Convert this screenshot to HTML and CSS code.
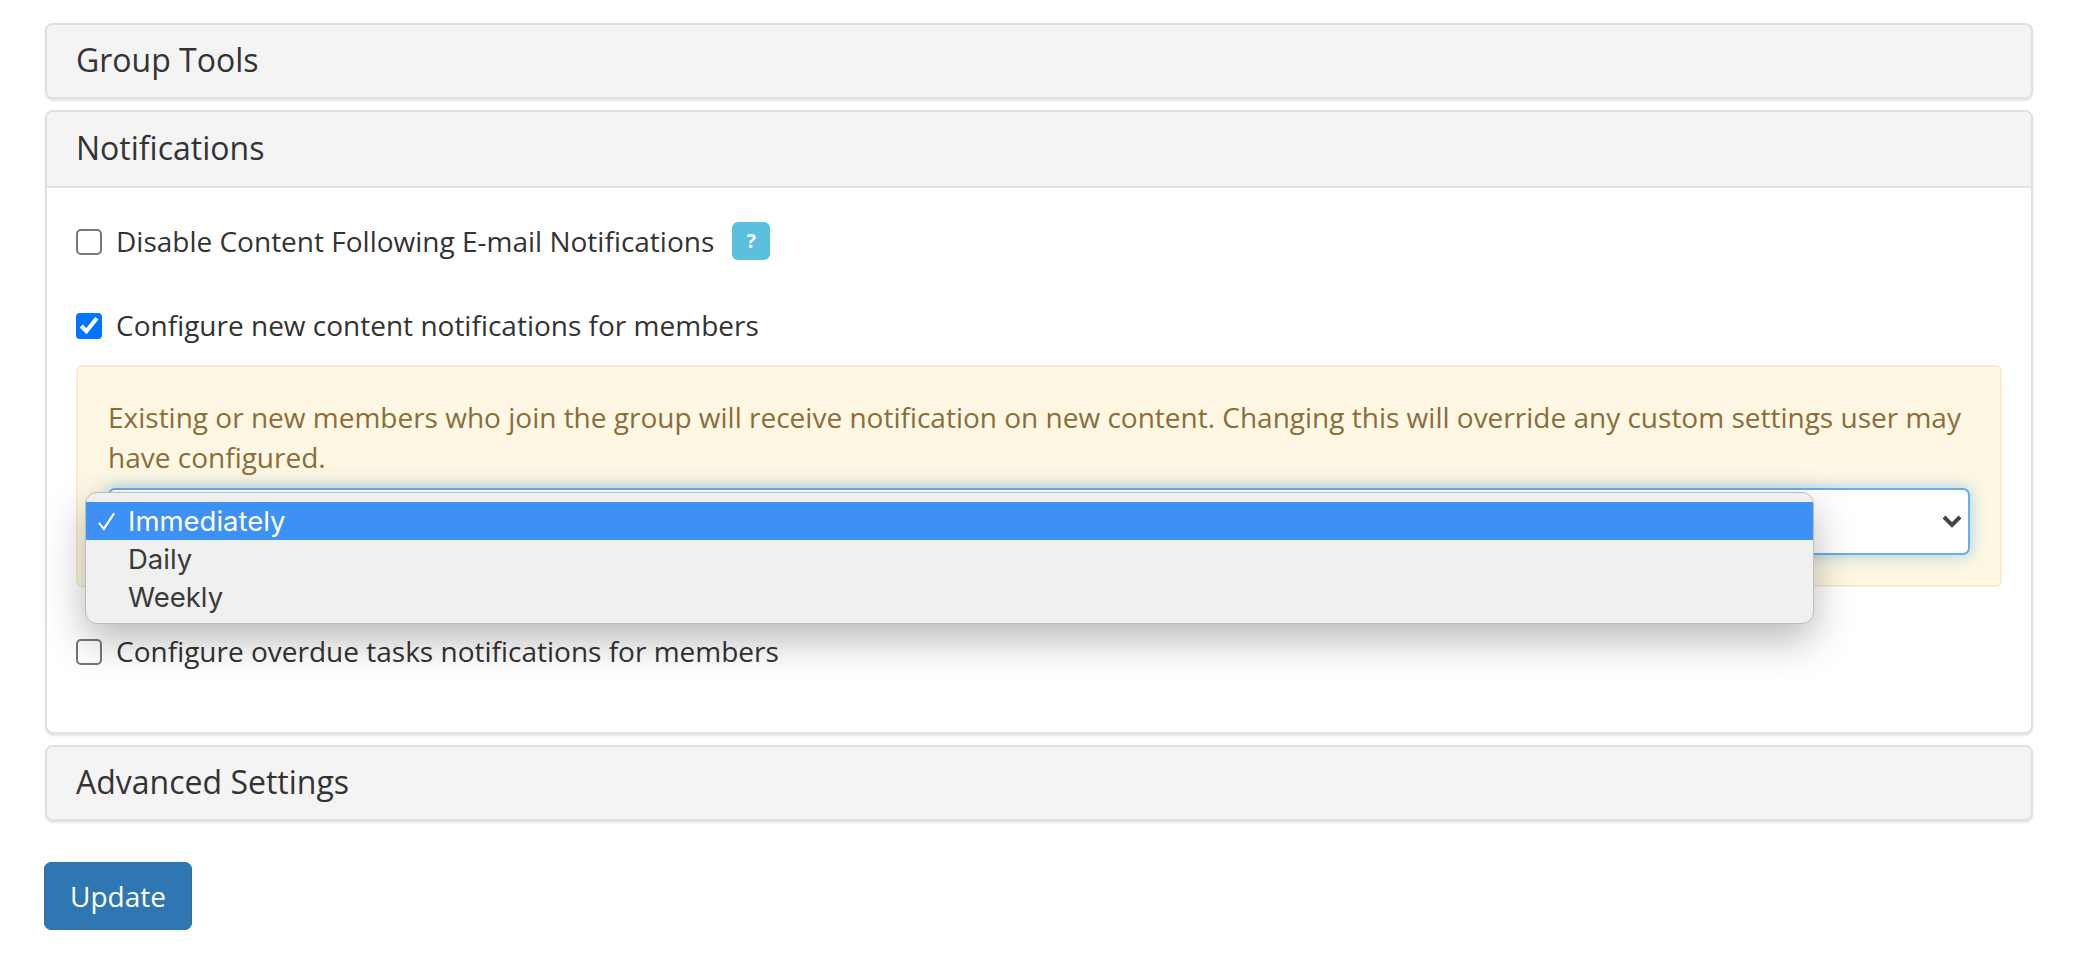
FILE: index.html
```html
<!DOCTYPE html>
<html lang="en">
<head>
<meta charset="utf-8">
<title>Group settings</title>
<link rel="stylesheet" href="styles.css">
</head>
<body>
<main class="page">
  <section class="panel"><h2 class="panel-title">Group Tools</h2></section>
  <section class="panel">
    <h2 class="panel-title panel-title-open">Notifications</h2>
    <div class="panel-body">
      <div class="row">
        <label class="check"><input type="checkbox"><span>Disable Content Following E-mail Notifications</span></label>
        <span class="help">?</span>
      </div>
      <div class="row row-second">
        <label class="check"><input type="checkbox" checked><span>Configure new content notifications for members</span></label>
      </div>
      <div class="alert">
        <p class="alert-text">Existing or new members who join the group will receive notification on new content. Changing this will override any custom settings user may have configured.</p>
        <div class="select">
          <svg class="chevron" viewBox="0 0 20 14" aria-hidden="true"><path d="M2 3l8 8 8-8" fill="none" stroke="#444" stroke-width="4"/></svg>
        </div>
        <ul class="menu">
          <li class="menu-item menu-item-active"><svg class="tick" viewBox="0 0 20 20" aria-hidden="true"><path d="M2 11.5l5.2 6.3L18 1.5" fill="none" stroke="#fff" stroke-width="2.3"/></svg>Immediately</li>
          <li class="menu-item">Daily</li>
          <li class="menu-item">Weekly</li>
        </ul>
      </div>
      <div class="row row-third">
        <label class="check"><input type="checkbox"><span>Configure overdue tasks notifications for members</span></label>
      </div>
    </div>
  </section>
  <section class="panel"><h2 class="panel-title">Advanced Settings</h2></section>
  <button class="update" type="button">Update</button>
</main>
</body>
</html>
```
FILE: styles.css
```css
* { box-sizing: border-box; }
html, body { margin: 0; background: #fff; }
body { font-family: "Open Sans", "Liberation Sans", sans-serif; color: #333; font-size: 28px; line-height: 40px; }
.page { padding: 23px 63px 0 45px; display: flex; flex-direction: column; gap: 11px; align-items: stretch; }
.panel { border: 2.5px solid #e0e0e0; border-radius: 8px; background: #fff; box-shadow: 0 1.5px 2px rgba(0,0,0,.1); }
.panel-title { margin: 0; height: 72px; padding: 0 29px; background: #f4f4f4; border-radius: 6px; font-size: 32px; font-weight: 400; line-height: 70px; color: #333; }
.panel-title-open { border-bottom: 2.5px solid #e0e0e0; border-radius: 6px 6px 0 0; height: 76px; line-height: 71px; }
.panel-body { padding: 33px 29px 0; height: 544px; }
.row { display: flex; align-items: center; height: 40px; }
.row-second { margin-top: 44px; }
.row-third { margin-top: 44px; }
.check { display: flex; align-items: center; }
.check input { zoom: 2; width: 13px; height: 13px; margin: 1px 7px 0 0; flex: none; }
.help { margin-left: 18px; width: 38px; height: 38px; background: #5bc0de; color: #fff; border-radius: 6px; font-size: 20px; font-weight: 700; line-height: 38px; text-align: center; }
.alert { position: relative; margin-top: 20px; height: 222px; padding: 29.5px 30px 0; background: #fdf7e3; border: 2px solid #f9ebcf; border-radius: 6px; color: #8a6d3b; }
.alert-text { margin: 0; }
.select { margin-top: 11px; height: 67px; background: #fff; border: 2.5px solid #66afe9; border-radius: 7px; box-shadow: 0 0 16px rgba(102,175,233,.6); display: flex; align-items: center; justify-content: flex-end; padding-right: 6px; }
.chevron { width: 20px; height: 14px; }
.menu { position: absolute; left: 7px; top: 125px; width: 1729px; height: 132px; margin: 0; padding: 9px 0 0; list-style: none; background: #f0f0f0; border: 1px solid #bdbdbd; border-radius: 12px; box-shadow: 0 16px 40px rgba(0,0,0,.28); font-family: Inter, "Liberation Sans", sans-serif; font-size: 27.5px; line-height: 38px; color: #3a3a3a; overflow: hidden; }
.menu-item { position: relative; height: 38px; padding-left: 42px; }
.menu-item-active { background: #3e91f4; color: #fff; }
.tick { position: absolute; left: 11px; top: 10px; width: 19px; height: 19px; }
.update { align-self: flex-start; margin: 30px 0 0 -1px; width: 148px; height: 68px; background: #2e77b2; border: 1.5px solid #2e6da4; border-radius: 7px; color: #fff; font: 400 28px "Open Sans", sans-serif; }
```
